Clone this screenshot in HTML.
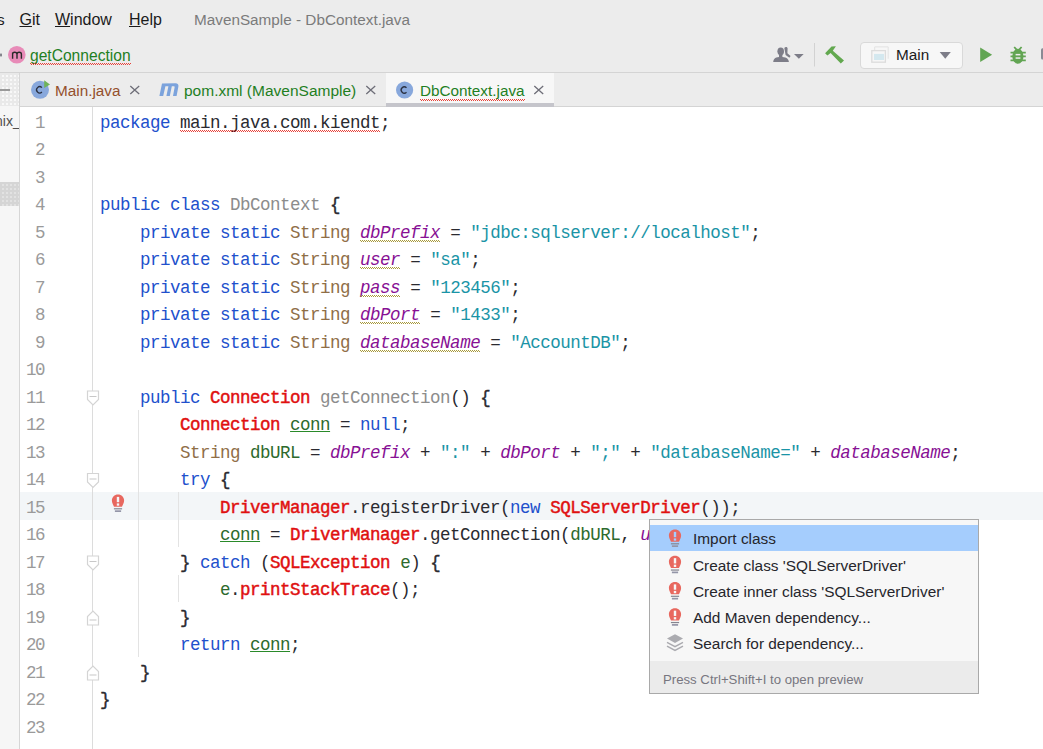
<!DOCTYPE html>
<html><head><meta charset="utf-8">
<style>
*{margin:0;padding:0;box-sizing:border-box}
html,body{width:1043px;height:749px;overflow:hidden;background:#fff}
body{position:relative;font-family:"Liberation Sans",sans-serif;font-size:15.3px;color:#1b1b1b}
.abs{position:absolute}
#top{left:0;top:0;width:1043px;height:73px;background:#ececec;border-bottom:1px solid #d4d4d4}
.menu{top:11px;white-space:nowrap;line-height:18px}
.menu u{text-decoration:underline;text-underline-offset:0.5px;text-decoration-thickness:1px}
#tabs{left:20px;top:73px;width:1023px;height:34px;background:#ececec;border-bottom:1px solid #d4d4d4}
#lp{left:0;top:73px;width:20px;height:676px;background:#f5f5f5;border-right:1px solid #d6d6d6}
#editor{left:20px;top:107px;width:1023px;height:642px;background:#fff}
.ln{position:absolute;left:0px;width:44.3px;text-align:right;font-family:"Liberation Mono",monospace;font-size:17.5px;letter-spacing:-1.3px;color:#9a9a9a;line-height:27.5px;height:27.5px;padding-top:2.6px}
.cl{position:absolute;left:100px;white-space:pre;font-family:"Liberation Mono",monospace;font-size:17.5px;letter-spacing:-0.5px;color:#2a2a30;line-height:27.5px;height:27.5px;padding-top:2.6px}
.br{font-weight:normal;-webkit-text-stroke:0.4px #2a2a30}
.k{color:#2150cc}
.s{color:#1a94a6}
.t{color:#8f6e47}
.f{color:#871094;font-style:italic}
.r{color:#e01010;font-weight:normal;-webkit-text-stroke:0.45px #e01010}
.g{color:#2d6a2d}
.gr{color:#8c8c8c}
.wr,.wy,.wv{position:relative;--c:#e8423a}
.wy{--c:#a89a3a}
.wr:after,.wy:after,.wv:after{content:"";position:absolute;left:0;right:0;bottom:var(--b,1px);height:2px;background:linear-gradient(90deg,var(--c) 50%,transparent 50%) 0 0/2px 1px repeat-x,linear-gradient(90deg,transparent 50%,var(--c) 50%) 0 1px/2px 1px repeat-x}
.ul{text-decoration:underline #2a8a2a;text-underline-offset:1px}
.tab{position:absolute;top:74px;height:34px;line-height:34px;white-space:nowrap}
.x{position:absolute;width:10px;height:10px}
.x:before,.x:after{content:"";position:absolute;left:-1px;top:4px;width:12px;height:1.3px;background:#8a8a8a;transform:rotate(45deg)}
.x:after{transform:rotate(-45deg)}
.ci{position:absolute;width:17px;height:17px;border-radius:50%;background:#7f9fd6;color:#2a2f3a;font-size:11px;font-weight:bold;line-height:17px;text-align:center}
#popup{left:649px;top:519px;width:330px;height:174px;background:#f7f7f7;border:1px solid #a9a9a9}
.pi{position:absolute;left:693px;height:26px;line-height:26px;white-space:nowrap;font-size:15.4px;color:#26262c}
.bulb{position:absolute;width:13px;height:18px}
</style></head><body>
<div id="top" class="abs"></div>
<div class="abs menu" style="left:-3px">s</div>
<div class="abs menu" style="left:19.5px;font-size:16px;top:10.5px"><u>G</u>it</div>
<div class="abs menu" style="left:55px;font-size:16px;top:10.5px"><u>W</u>indow</div>
<div class="abs menu" style="left:129px;font-size:16px;top:10.5px"><u>H</u>elp</div>
<div class="abs menu" style="left:194px;color:#7b7b7b">MavenSample - DbContext.java</div>

<!-- breadcrumb -->
<div class="abs" style="left:30px;top:47px;line-height:18px;color:#1f7f1f;font-size:15.6px"><span class="wv" style="--b:-1px">getConnection</span></div>
<div class="abs" style="left:859.5px;top:41.5px;width:103px;height:27px;background:#f7f7f7;border:1px solid #d9d9d9;border-radius:4px"></div>
<div class="abs" style="left:896px;top:46px;line-height:18px">Main</div>
<div class="abs" style="left:0;top:73px;width:19px;height:676px;background:#f6f6f6;overflow:hidden">
 <div class="abs" style="left:0;top:0;width:19px;height:33px;background:radial-gradient(circle,#f8f8f8 0.8px,transparent 1px) 1px 1px/4px 4px,#e9e9e9"></div>
 <div class="abs" style="left:0;top:16px;width:10px;height:1.6px;background:#999"></div>
 <div class="abs" style="left:-5px;top:39px;line-height:18px;font-size:14px;color:#505050;white-space:nowrap">nix_</div>
 <div class="abs" style="left:0;top:109px;width:19px;height:24px;background:radial-gradient(circle,#e2e2e2 0.8px,transparent 1px) 1px 1px/4px 4px,#d5d5d5"></div>
</div>
<div class="abs" style="left:19px;top:73px;width:1px;height:676px;background:#d6d6d6"></div>
<div id="tabs" class="abs"></div>
<!-- tab 1 -->
<div class="tab" style="left:55px;color:#94502c">Main.java</div>
<!-- tab 2 -->
<div class="tab" style="left:184px;color:#1f7f1f;font-size:15.5px">pom.xml (MavenSample)</div>
<!-- tab 3 active -->
<div class="abs" style="left:385.5px;top:73px;width:168px;height:31px;background:#f7f7f7"></div>
<div class="abs" style="left:385.5px;top:103px;width:168px;height:4px;background:#c5c5cb"></div>
<div class="tab" style="left:420px;color:#1f7f1f"><span class="wv" style="--b:-2px">DbContext.java</span></div>


<svg class="abs" style="left:0;top:0;pointer-events:none" width="1043" height="110" viewBox="0 0 1043 110">
 <!-- breadcrumb dot + m -->
 <rect x="0" y="53.6" width="2" height="2.8" fill="#85858d"/>
 <circle cx="16.8" cy="54.8" r="8.8" fill="#e88bb8"/>
 <path d="M12.6 58.8 V52.6 M12.6 54.3 C12.6 52.8 13.5 52.3 14.6 52.3 C15.9 52.3 17 52.8 17 54.3 V58.8 M17 54.3 C17 52.8 18 52.3 19.2 52.3 C20.5 52.3 21.4 52.8 21.4 54.3 V58.8" fill="none" stroke="#2a2a2a" stroke-width="1.4"/>
 <!-- users -->
 <ellipse cx="780.7" cy="51.3" rx="3.3" ry="3.9" fill="#7d7d88"/>
 <rect x="779" y="54" width="3.4" height="3" fill="#7d7d88"/>
 <path d="M773.2 62 C773.4 58.3 776 57 780.7 57 C785.5 57 788.6 58.3 788.9 62 Z" fill="#7d7d88"/>
 <path d="M784.3 48 C785.3 46.6 787.2 46.8 787.6 48.3 L787.4 53.2 L790.6 56 L789.4 57.7 L785.6 55 Z" fill="#7d7d88"/>
 <path d="M794 54 H803.7 L798.85 58.8 Z" fill="#7d7d88"/>
 <!-- separator -->
 <rect x="814" y="43" width="1" height="23.5" fill="#d2d2d2"/>
 <!-- hammer -->
 <path d="M825.1 53.2 L831.5 46.5 L835.9 46.3 L832.8 50.7 L844 60.6 L840.8 63.5 L830.6 52.9 L827.4 55.5 Z" fill="#62a84f"/>
 <!-- window icon -->
 <path d="M874.7 50 V46.9 H888.2 V58.7" fill="none" stroke="#e2e2e2" stroke-width="1"/>
 <rect x="871.8" y="50.6" width="13.6" height="11.6" fill="#f6f6f6" stroke="#dcdcdc" stroke-width="1.3"/>
 <rect x="874" y="53.9" width="10" height="6.1" fill="#d4e8ef"/>
 <path d="M939.7 52 H950.8 L945.25 58.7 Z" fill="#7d7d88"/>
 <!-- run -->
 <path d="M980.2 47.5 L992.1 54.8 L980.2 62.1 Z" fill="#62a553"/>
 <!-- debug -->
 <path d="M1014.2 47 L1016.8 49.8 M1021.6 47 L1019 49.8" stroke="#62a553" stroke-width="1.8" fill="none"/>
 <ellipse cx="1017.9" cy="56.3" rx="5.6" ry="7.5" fill="#62a553"/>
 <path d="M1010.5 52.6 H1025.8 M1010.5 56.3 H1025.8 M1010.5 60.4 H1025.8" stroke="#62a553" stroke-width="1.8"/>
 <rect x="1015.6" y="53.9" width="4.8" height="1.5" fill="#ececec"/>
 <rect x="1015.6" y="57.3" width="4.8" height="1.5" fill="#ececec"/>
 <rect x="1041" y="48.2" width="4" height="11.2" rx="1.5" fill="#8a8a94"/>
 <!-- tab1 icon -->
 <circle cx="40" cy="89.8" r="9" fill="#88a8dc"/>
 <path d="M41.9 87.6 A3.1 3.1 0 1 0 41.9 92" fill="none" stroke="#2a3040" stroke-width="1.3"/>
 <path d="M44.2 80.2 L50 84.4 L44.2 88 Z" fill="#6fb35a"/>
 <path d="M130.3 85.9 L139.2 93.9 M139.2 85.9 L130.3 93.9" stroke="#6e6e78" stroke-width="1.3"/>
 <!-- tab2 icon -->
 <path d="M159.4 96 L162 83.6 L175.5 83.2 C177.8 83.2 178.8 84.5 178.4 86.5 L176.6 96 L173 96 L174.6 87.5 C174.8 86.6 174.4 86.3 173.6 86.3 L171.8 86.3 L169.8 96 L166.4 96 L168.4 86.3 L165.4 86.3 L163.2 96 Z" fill="#7ca3dc"/>
 <path d="M366.3 85.9 L375.2 93.9 M375.2 85.9 L366.3 93.9" stroke="#6e6e78" stroke-width="1.3"/>
 <!-- tab3 icon -->
 <circle cx="404.6" cy="90" r="8.6" fill="#88a8dc"/>
 <path d="M406.5 87.8 A3.1 3.1 0 1 0 406.5 92.2" fill="none" stroke="#2a3040" stroke-width="1.3"/>
 <path d="M534.3 85.9 L543.2 93.9 M543.2 85.9 L534.3 93.9" stroke="#6e6e78" stroke-width="1.3"/>
</svg>
<div id="editor" class="abs"></div>
<div class="abs" style="left:20px;top:492.0px;width:1023px;height:27.5px;background:#f3f6f8"></div>
<div class="abs" style="left:92px;top:107px;width:1px;height:642px;background:#dcdcdc"></div>
<div class="abs" style="left:138px;top:409.5px;width:1px;height:247.5px;background:#e3e3e3"></div>
<div class="abs" style="left:178px;top:492.0px;width:1px;height:55.0px;background:#e3e3e3"></div>
<div class="abs" style="left:178px;top:574.5px;width:1px;height:27.5px;background:#e3e3e3"></div>
<div class="ln" style="top:107.0px">1</div>
<div class="cl" style="top:107.0px"><span class="k">package</span> <span class="wr">main.java.com.kiendt</span>;</div>
<div class="ln" style="top:134.5px">2</div>
<div class="ln" style="top:162.0px">3</div>
<div class="ln" style="top:189.5px">4</div>
<div class="cl" style="top:189.5px"><span class="k">public</span> <span class="k">class</span> <span class="gr">DbContext</span> <b class="br">{</b></div>
<div class="ln" style="top:217.0px">5</div>
<div class="cl" style="top:217.0px">    <span class="k">private</span> <span class="k">static</span> <span class="t">String</span> <span class="f wy">dbPrefix</span> = <span class="s">&quot;jdbc:sqlserver://localhost&quot;</span>;</div>
<div class="ln" style="top:244.5px">6</div>
<div class="cl" style="top:244.5px">    <span class="k">private</span> <span class="k">static</span> <span class="t">String</span> <span class="f wy">user</span> = <span class="s">&quot;sa&quot;</span>;</div>
<div class="ln" style="top:272.0px">7</div>
<div class="cl" style="top:272.0px">    <span class="k">private</span> <span class="k">static</span> <span class="t">String</span> <span class="f wy">pass</span> = <span class="s">&quot;123456&quot;</span>;</div>
<div class="ln" style="top:299.5px">8</div>
<div class="cl" style="top:299.5px">    <span class="k">private</span> <span class="k">static</span> <span class="t">String</span> <span class="f wy">dbPort</span> = <span class="s">&quot;1433&quot;</span>;</div>
<div class="ln" style="top:327.0px">9</div>
<div class="cl" style="top:327.0px">    <span class="k">private</span> <span class="k">static</span> <span class="t">String</span> <span class="f wy">databaseName</span> = <span class="s">&quot;AccountDB&quot;</span>;</div>
<div class="ln" style="top:354.5px">10</div>
<div class="ln" style="top:382.0px">11</div>
<div class="cl" style="top:382.0px">    <span class="k">public</span> <span class="r">Connection</span> <span class="gr">getConnection</span>() <b class="br">{</b></div>
<div class="ln" style="top:409.5px">12</div>
<div class="cl" style="top:409.5px">        <span class="r">Connection</span> <span class="g ul">conn</span> = <span class="k">null</span>;</div>
<div class="ln" style="top:437.0px">13</div>
<div class="cl" style="top:437.0px">        <span class="t">String</span> <span class="g">dbURL</span> = <span class="f">dbPrefix</span> + <span class="s">&quot;:&quot;</span> + <span class="f">dbPort</span> + <span class="s">&quot;;&quot;</span> + <span class="s">&quot;databaseName=&quot;</span> + <span class="f">databaseName</span>;</div>
<div class="ln" style="top:464.5px">14</div>
<div class="cl" style="top:464.5px">        <span class="k">try</span> <b class="br">{</b></div>
<div class="ln" style="top:492.0px">15</div>
<div class="cl" style="top:492.0px">            <span class="r">DriverManager</span>.registerDriver(<span class="k">new</span> <span class="r">SQLServerDriver</span>());</div>
<div class="ln" style="top:519.5px">16</div>
<div class="cl" style="top:519.5px">            <span class="g ul">conn</span> = <span class="r">DriverManager</span>.getConnection(<span class="g">dbURL</span>, <span class="f">user</span>, <span class="f">pass</span>);</div>
<div class="ln" style="top:547.0px">17</div>
<div class="cl" style="top:547.0px">        <b class="br">}</b> <span class="k">catch</span> (<span class="r">SQLException</span> <span class="g">e</span>) <b class="br">{</b></div>
<div class="ln" style="top:574.5px">18</div>
<div class="cl" style="top:574.5px">            <span class="g">e</span>.<span class="r">printStackTrace</span>();</div>
<div class="ln" style="top:602.0px">19</div>
<div class="cl" style="top:602.0px">        <b class="br">}</b></div>
<div class="ln" style="top:629.5px">20</div>
<div class="cl" style="top:629.5px">        <span class="k">return</span> <span class="g ul">conn</span>;</div>
<div class="ln" style="top:657.0px">21</div>
<div class="cl" style="top:657.0px">    <b class="br">}</b></div>
<div class="ln" style="top:684.5px">22</div>
<div class="cl" style="top:684.5px"><b class="br">}</b></div>
<div class="ln" style="top:712.0px">23</div>
<svg class="abs" style="left:0;top:0" width="1043" height="749" viewBox="0 0 1043 749"><path d="M87.5 391.0 H98.5 V399.5 L93 405.0 L87.5 399.5 Z" fill="#fff" stroke="#d4d4d4" stroke-width="1.2"/><rect x="89.5" y="396.0" width="7" height="1" fill="#c8c8c8"/><path d="M87.5 473.5 H98.5 V482.0 L93 487.5 L87.5 482.0 Z" fill="#fff" stroke="#d4d4d4" stroke-width="1.2"/><rect x="89.5" y="478.5" width="7" height="1" fill="#c8c8c8"/><path d="M87.5 556.0 H98.5 V564.5 L93 570.0 L87.5 564.5 Z" fill="#fff" stroke="#d4d4d4" stroke-width="1.2"/><rect x="89.5" y="561.0" width="7" height="1" fill="#c8c8c8"/><path d="M87.5 625.0 H98.5 V616.5 L93 611.0 L87.5 616.5 Z" fill="#fff" stroke="#d4d4d4" stroke-width="1.2"/><rect x="89.5" y="619.5" width="7" height="1" fill="#c8c8c8"/><path d="M87.5 680.0 H98.5 V671.5 L93 666.0 L87.5 671.5 Z" fill="#fff" stroke="#d4d4d4" stroke-width="1.2"/><rect x="89.5" y="674.5" width="7" height="1" fill="#c8c8c8"/><g transform="translate(111.5 494) scale(1.0)"><path d="M6.5 0.4 C10.1 0.4 12.6 3.1 12.6 6.5 C12.6 9.1 11.3 10.6 10.5 12.8 L2.5 12.8 C1.7 10.6 0.4 9.1 0.4 6.5 C0.4 3.1 2.9 0.4 6.5 0.4 Z" fill="#e8685f"/><rect x="5.3" y="2.9" width="2.4" height="5.3" fill="#f3f6f8"/><rect x="5.3" y="9.4" width="2.4" height="2.3" fill="#f3f6f8"/><rect x="2.4" y="14.2" width="8.2" height="1.2" fill="#85858f"/><rect x="3.4" y="16.3" width="6.2" height="1.7" fill="#9496a8"/></g></svg>

<div class="abs" style="left:649px;top:519px;width:330px;height:175px;background:#f7f7f7;border:1px solid #a9a9a9"></div>
<div class="abs" style="left:650px;top:525px;width:328px;height:26px;background:#a5cdfd"></div>
<div class="abs" style="left:650px;top:660.5px;width:328px;height:32.5px;background:#ebebeb"></div>
<div class="pi" style="top:526.30px">Import class</div>
<div class="pi" style="top:552.55px">Create class &#x27;SQLServerDriver&#x27;</div>
<div class="pi" style="top:578.80px">Create inner class &#x27;SQLServerDriver&#x27;</div>
<div class="pi" style="top:605.05px">Add Maven dependency...</div>
<div class="pi" style="top:631.30px">Search for dependency...</div>
<div class="abs" style="left:663px;top:671.5px;line-height:16px;font-size:13.2px;color:#77767f;white-space:nowrap">Press Ctrl+Shift+I to open preview</div>
<svg class="abs" style="left:0;top:0" width="1043" height="749" viewBox="0 0 1043 749">
<g transform="translate(668.5 529.0) scale(1.0)"><path d="M6.5 0.4 C10.1 0.4 12.6 3.1 12.6 6.5 C12.6 9.1 11.3 10.6 10.5 12.8 L2.5 12.8 C1.7 10.6 0.4 9.1 0.4 6.5 C0.4 3.1 2.9 0.4 6.5 0.4 Z" fill="#e8685f"/><rect x="5.3" y="2.9" width="2.4" height="5.3" fill="#a5cdfd"/><rect x="5.3" y="9.4" width="2.4" height="2.3" fill="#a5cdfd"/><rect x="2.4" y="14.2" width="8.2" height="1.2" fill="#85858f"/><rect x="3.4" y="16.3" width="6.2" height="1.7" fill="#9496a8"/></g>
<g transform="translate(668.5 555.25) scale(1.0)"><path d="M6.5 0.4 C10.1 0.4 12.6 3.1 12.6 6.5 C12.6 9.1 11.3 10.6 10.5 12.8 L2.5 12.8 C1.7 10.6 0.4 9.1 0.4 6.5 C0.4 3.1 2.9 0.4 6.5 0.4 Z" fill="#e8685f"/><rect x="5.3" y="2.9" width="2.4" height="5.3" fill="#f7f7f7"/><rect x="5.3" y="9.4" width="2.4" height="2.3" fill="#f7f7f7"/><rect x="2.4" y="14.2" width="8.2" height="1.2" fill="#85858f"/><rect x="3.4" y="16.3" width="6.2" height="1.7" fill="#9496a8"/></g>
<g transform="translate(668.5 581.5) scale(1.0)"><path d="M6.5 0.4 C10.1 0.4 12.6 3.1 12.6 6.5 C12.6 9.1 11.3 10.6 10.5 12.8 L2.5 12.8 C1.7 10.6 0.4 9.1 0.4 6.5 C0.4 3.1 2.9 0.4 6.5 0.4 Z" fill="#e8685f"/><rect x="5.3" y="2.9" width="2.4" height="5.3" fill="#f7f7f7"/><rect x="5.3" y="9.4" width="2.4" height="2.3" fill="#f7f7f7"/><rect x="2.4" y="14.2" width="8.2" height="1.2" fill="#85858f"/><rect x="3.4" y="16.3" width="6.2" height="1.7" fill="#9496a8"/></g>
<g transform="translate(668.5 607.75) scale(1.0)"><path d="M6.5 0.4 C10.1 0.4 12.6 3.1 12.6 6.5 C12.6 9.1 11.3 10.6 10.5 12.8 L2.5 12.8 C1.7 10.6 0.4 9.1 0.4 6.5 C0.4 3.1 2.9 0.4 6.5 0.4 Z" fill="#e8685f"/><rect x="5.3" y="2.9" width="2.4" height="5.3" fill="#f7f7f7"/><rect x="5.3" y="9.4" width="2.4" height="2.3" fill="#f7f7f7"/><rect x="2.4" y="14.2" width="8.2" height="1.2" fill="#85858f"/><rect x="3.4" y="16.3" width="6.2" height="1.7" fill="#9496a8"/></g>
<g transform="translate(0 -0.8)"><path d="M667 639.4 L675 635 L683 639.4 L675 643.8 Z" fill="#ababb0"/><path d="M667 643.2 L675 647.4 L683 643.2 M667 647 L675 651.2 L683 647" fill="none" stroke="#ababb0" stroke-width="1.5"/></g>
</svg>
</body></html>
